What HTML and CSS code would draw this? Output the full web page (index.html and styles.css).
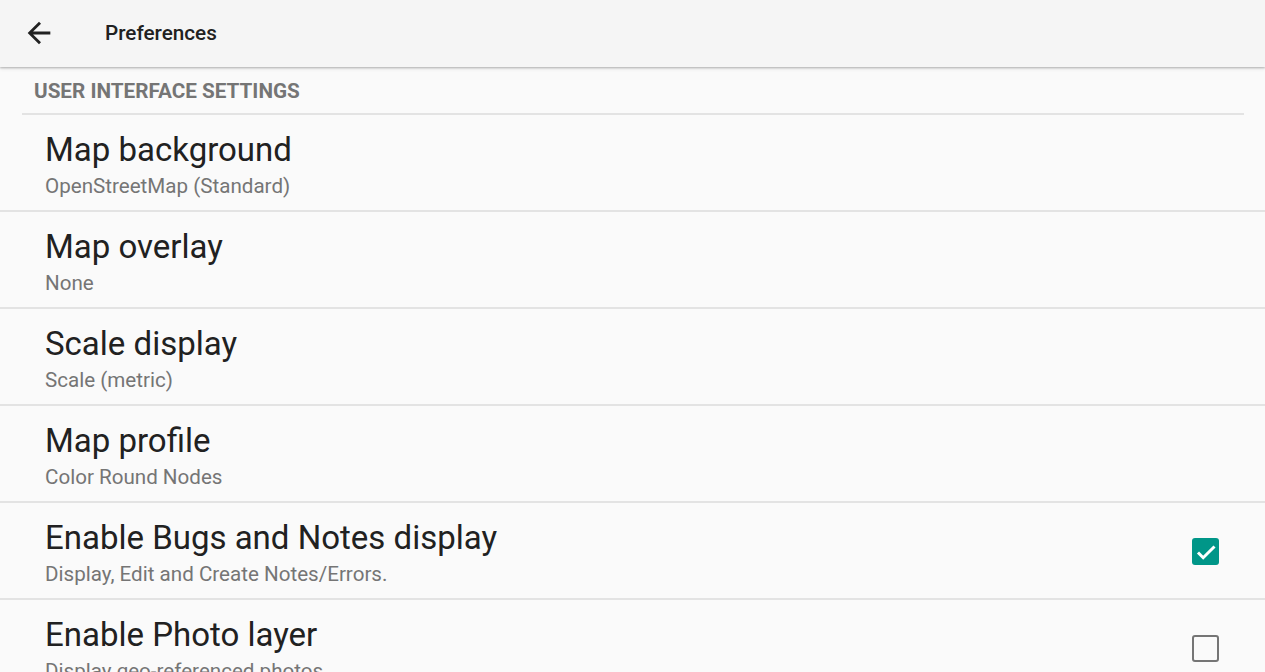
FILE: index.html
```html
<!DOCTYPE html>
<html>
<head>
<meta charset="utf-8">
<link rel="stylesheet" href="styles.css">
</head>
<body>
<header class="appbar">
  <svg class="back" width="34" height="34" viewBox="0 0 24 24"><path d="M20 11H7.83l5.59-5.59L12 4l-8 8 8 8 1.41-1.41L7.83 13H20v-2z" fill="#212121"/></svg>
  <div class="apptitle">Preferences</div>
</header>
<main class="list">
  <div class="category">USER INTERFACE SETTINGS</div>
  <div class="item">
    <div class="texts"><div class="title">Map background</div><div class="summary">OpenStreetMap (Standard)</div></div>
  </div>
  <div class="item">
    <div class="texts"><div class="title">Map overlay</div><div class="summary">None</div></div>
  </div>
  <div class="item">
    <div class="texts"><div class="title">Scale display</div><div class="summary">Scale (metric)</div></div>
  </div>
  <div class="item">
    <div class="texts"><div class="title">Map profile</div><div class="summary">Color Round Nodes</div></div>
  </div>
  <div class="item">
    <div class="texts"><div class="title">Enable Bugs and Notes display</div><div class="summary">Display, Edit and Create Notes/Errors.</div></div>
    <div class="check on"><svg width="24" height="24" viewBox="0 0 24 24"><path d="M4 12.5l5.2 5.2L20.5 6.5" fill="none" stroke="#fff" stroke-width="3"/></svg></div>
  </div>
  <div class="item">
    <div class="texts"><div class="title">Enable Photo layer</div><div class="summary">Display geo-referenced photos</div></div>
    <div class="check off"></div>
  </div>
</main>
</body>
</html>
```
FILE: styles.css
```css
html, body { margin: 0; padding: 0; }
body {
  width: 1265px; height: 672px; overflow: hidden;
  background: #fafafa;
  font-family: Roboto, "Noto Sans", sans-serif;
  color: #212121;
}
.appbar {
  height: 67px;
  background: #f5f5f5;
  display: flex; align-items: center;
  box-shadow: 0 1px 2px rgba(0,0,0,0.25), 0 2px 4px rgba(0,0,0,0.08);
  position: relative; z-index: 1;
}
.back { margin-left: 22px; margin-top: -2px; }
.apptitle {
  margin-left: 49px; margin-top: -2px;
  font-size: 20.7px; font-weight: 500; color: #212121;
}
.category {
  margin: 0 21px 0 22px;
  padding: 12px 0 0 12px;
  height: 48px;
  box-sizing: border-box;
  font-size: 20.7px; font-weight: 700; color: #757575;
  border-bottom: 2px solid #e3e3e3;
  line-height: 24px;
}
.item {
  height: 97px;
  box-sizing: border-box;
  border-bottom: 2px solid #e3e3e3;
  display: flex; align-items: flex-start;
  padding-left: 45px; padding-right: 46px;
}
.texts { flex: 1; padding-top: 15px; }
.title { font-size: 33px; line-height: 40px; color: #212121; }
.summary { font-size: 20.6px; line-height: 30px; color: #757575; margin-top: 1px; }
.check {
  width: 27px; height: 27px; box-sizing: border-box;
  border-radius: 3px; margin-top: 35px;
  display: flex; align-items: center; justify-content: center;
}
.check.on { background: #009688; }
.check.off { border: 2.5px solid #757575; }
```
